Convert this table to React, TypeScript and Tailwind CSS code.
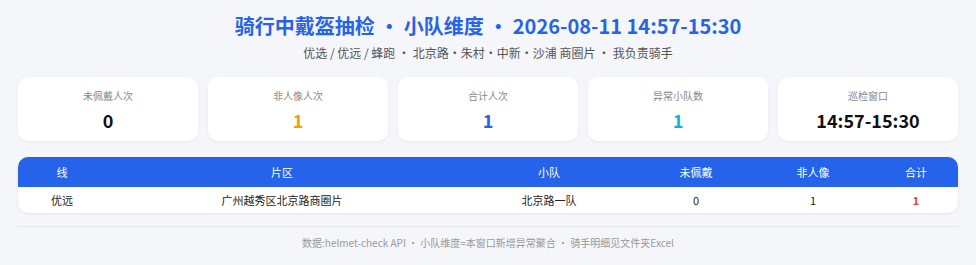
import React from "react";

const font = { fontFamily: '"Noto Sans CJK SC", "Noto Sans", sans-serif' };

const cards = [
  { label: "未佩戴人次", value: "0", cls: "text-[#111111]" },
  { label: "非人像人次", value: "1", cls: "text-[#f59e0b]" },
  { label: "合计人次", value: "1", cls: "text-[#2563eb]" },
  { label: "异常小队数", value: "1", cls: "text-[#06b6d4]" },
  { label: "巡检窗口", value: "14:57-15:30", cls: "text-[#111111]" },
];

export default function App() {
  return (
    <div className="w-[976px] h-[265px] bg-[#f5f6fa] px-[18px] pt-[12px]" style={font}>
      <div className="text-center text-[20px] leading-[28px] font-bold text-[#2563eb]">
        骑行中戴盔抽检 · 小队维度 · 2026-08-11 14:57-15:30
      </div>
      <div className="mt-[4px] text-center text-[12px] leading-[18px] text-[#555555]">
        优选 / 优远 / 蜂跑 · 北京路·朱村·中新·沙浦 商圈片 · 我负责骑手
      </div>
      <div className="mt-[15px] grid grid-cols-5 gap-[10px]">
        {cards.map((c) => (
          <div key={c.label} className="h-[64px] rounded-[10px] bg-white shadow-[0_1px_3px_rgba(0,0,0,0.06)] pt-[11px] text-center">
            <div className="text-[10px] leading-[16px] text-[#888888]">{c.label}</div>
            <div className={`mt-[4px] text-[18px] leading-[24px] font-bold ${c.cls}`}>{c.value}</div>
          </div>
        ))}
      </div>
      <div className="mt-[16px] rounded-[10px] overflow-hidden bg-white shadow-[0_1px_3px_rgba(0,0,0,0.08)]">
        <div className="flex h-[30px] items-center bg-[#2563eb] text-white text-[11px]">
          <div className="w-[88px] text-center">线</div>
          <div className="w-[352px] text-center">片区</div>
          <div className="w-[182px] text-center">小队</div>
          <div className="w-[112px] text-center">未佩戴</div>
          <div className="w-[122px] text-center">非人像</div>
          <div className="flex-1 text-center">合计</div>
        </div>
        <div className="flex h-[26px] items-center text-[11px] text-[#222222]">
          <div className="w-[88px] text-center">优远</div>
          <div className="w-[352px] text-center">广州越秀区北京路商圈片</div>
          <div className="w-[182px] text-center">北京路一队</div>
          <div className="w-[112px] text-center">0</div>
          <div className="w-[122px] text-center">1</div>
          <div className="flex-1 text-center font-bold text-[#e53935]">1</div>
        </div>
      </div>
      <div className="mt-[13px] border-t border-[#e5e7eb] pt-[8px] text-center text-[10px] leading-[16px] text-[#999999]">
        数据:helmet-check API · 小队维度=本窗口新增异常聚合 · 骑手明细见文件夹Excel
      </div>
    </div>
  );
}
